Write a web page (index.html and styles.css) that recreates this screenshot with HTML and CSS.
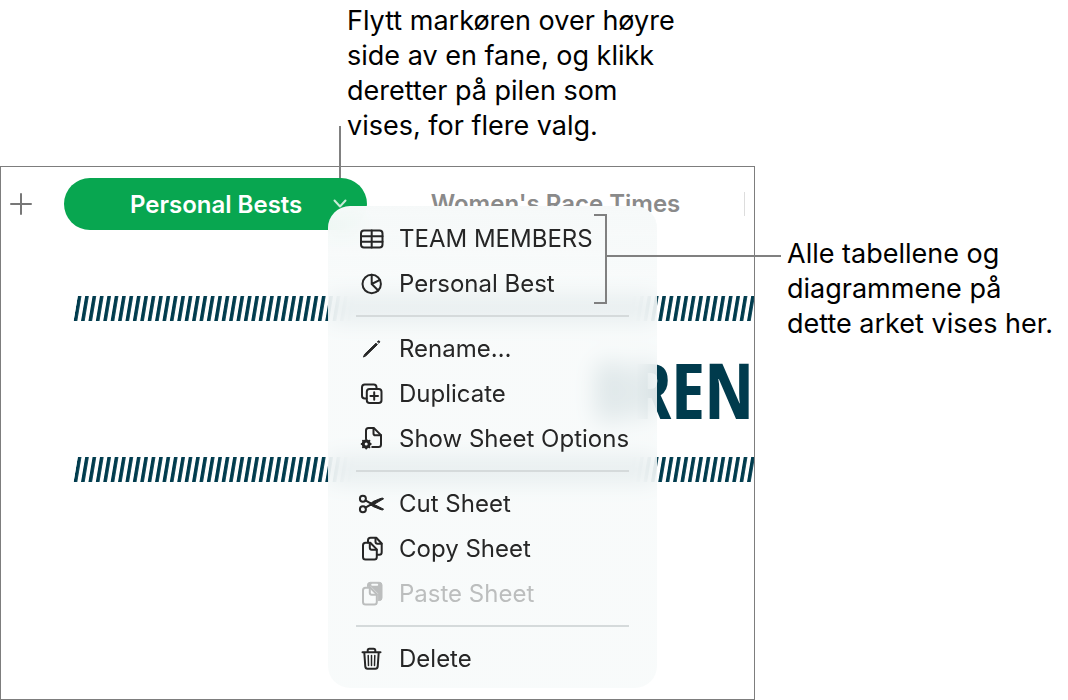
FILE: index.html
```html
<!DOCTYPE html>
<html lang="nb">
<head>
    <meta charset="UTF-8">
    <meta name="viewport" content="width=device-width, initial-scale=1.0">
    <title>Personal Bests</title>
    <link rel="stylesheet" href="styles.css">
</head>
<body>
    <main class="figure">
        <p class="callout callout-top">Flytt markøren over høyre<br>side av en fane, og klikk<br>deretter på pilen som<br>vises, for flere valg.</p>

        <section class="window">
            <nav class="tabs">
                <button class="add" aria-label="Add sheet">
                    <svg width="22" height="22" viewBox="0 0 22 22"><path d="M11 1v20M1 11h20"/></svg>
                </button>
                <button class="tab active">
                    <span>Personal Bests</span>
                    <svg class="chevron" width="14" height="10" viewBox="0 0 14 10"><path d="M1.5 1.5L7 7.5l5.500-6"/></svg>
                </button>
                <button class="tab">Women's Race Times</button>
            </nav>

            <div class="canvas">
                <svg class="stripes" width="100%" height="25">
                    <defs>
                        <pattern id="hatch" width="7.4" height="25" patternUnits="userSpaceOnUse">
                            <rect width="3.6" height="25"/>
                        </pattern>
                    </defs>
                    <g transform="translate(3.800 0) skewX(-9.500)"><rect width="110%" height="25" fill="url(#hatch)"/></g>
                </svg>
                <h1 class="title">BREN</h1>
                <svg class="stripes" width="100%" height="25">
                    <g transform="translate(3.800 0) skewX(-9.500)"><rect width="110%" height="25" fill="url(#hatch)"/></g>
                </svg>
            </div>

            <div class="menu">
                <button class="item">
                    <svg class="icon" viewBox="0 0 28 28"><rect x="3" y="5.500" width="21.500" height="17" rx="3"/><path d="M3 11.200h21.500M3 16.800h21.500M13.700 5.500v17"/></svg>
                    TEAM MEMBERS
                </button>
                <button class="item">
                    <svg class="icon" viewBox="0 0 28 28"><circle cx="13.700" cy="14" r="9.200"/><path d="M13.700 4.800V14l6.500 6.500M13.700 14l8.200-4.200"/></svg>
                    Personal Best
                </button>
                <hr>
                <button class="item">
                    <svg class="icon" viewBox="0 0 28 28"><path class="solid" d="M5.600 21.700l.9-2.300L18 8.200l1.400 1.400L8 20.700z"/><path class="solid" d="M19.600 6.600l.5-.5q.7-.5 1.300 0 .6.700.1 1.300l-.5.500z"/></svg>
                    Rename…
                </button>
                <button class="item">
                    <svg class="icon" viewBox="0 0 28 28"><path d="M8.500 18.500H6.800Q4 18.500 4 15.700V7.300Q4 4.500 6.800 4.500h8.900q2.800 0 2.800 2.800v1.400"/><rect x="8.800" y="9" width="14.700" height="14" rx="2.800"/><path d="M16.200 12.200v7.600M12.400 16h7.600"/></svg>
                    Duplicate
                </button>
                <button class="item">
                    <svg class="icon" viewBox="0 0 28 28"><path d="M8 13.500V5.500Q8 3 10.500 3h5.300l7.200 7.100v9.400q0 2.500-2.500 2.500h-6.300"/><path d="M15.500 3.200v5.200q0 1.800 1.800 1.800H23"/><circle class="gear" cx="8.200" cy="19" r="3"/><path d="M8.200 14.500v1M8.200 22.500v1M3.700 19h1M11.700 19h1M5 15.800l.8.800M10.600 21.400l.8.800M5 22.200l.8-.8M10.600 16.600l.8-.8"/></svg>
                    Show Sheet Options
                </button>
                <hr>
                <button class="item">
                    <svg class="icon" viewBox="0 0 28 28"><circle cx="4.900" cy="8.700" r="3"/><circle cx="4.900" cy="19.300" r="3"/><path d="M7.500 10.300l6 3.600M7.500 17.700l6-3.600"/><path class="solid" d="M11.500 15.200l3.300-3.600 8.200-3.300q2-.6 2.600.5L14.500 15.200zM12.500 12.600l13.100 6.600q-.7 1.200-2.600.5l-8.200-3.300z"/></svg>
                    Cut Sheet
                </button>
                <button class="item">
                    <svg class="icon" viewBox="0 0 28 28"><path d="M10 7.500V5.300Q10 2.800 12.500 2.800h5.800l5.400 5.700v8.700q0 2.500-2.500 2.500h-1.700"/><path d="M17.500 3v3.700q0 2 2 2h4"/><path d="M7.500 7.700h4.800l6.500 6.700v7.600q0 2.500-2.500 2.500H7.500Q5 24.500 5 22V10.200q0-2.500 2.500-2.500z"/><path d="M11.800 8v4.700q0 2 2 2h4.800"/></svg>
                    Copy Sheet
                </button>
                <button class="item" disabled>
                    <svg class="icon" viewBox="0 0 28 28"><path class="solid" d="M9.500 6.500V5q0-2.700 2.700-2.700h9.100Q24 2.300 24 5v12.900q0 2.700-2.700 2.700h-1.100v-7L13 6.500z"/><path class="slot" d="M14.200 4.700h5"/><path d="M7.500 7.700h4.800l6.500 6.700v7.600q0 2.500-2.500 2.500H7.500Q5 24.500 5 22V10.200q0-2.500 2.500-2.500z"/><path d="M11.800 8v4.700q0 2 2 2h4.800"/></svg>
                    Paste Sheet
                </button>
                <hr>
                <button class="item">
                    <svg class="icon" viewBox="0 0 28 28"><path d="M4.500 7.200h18M9.700 7V5.500q0-1.700 1.700-1.700h4.200q1.700 0 1.700 1.700V7M6.300 7.500l1 14.200q.2 2 2.200 2h8q2 0 2.200-2l1-14.200"/><path class="thin" d="M10.200 10.500l.3 10M13.500 10.500v10M16.800 10.500l-.3 10"/></svg>
                    Delete
                </button>
            </div>

            <span class="leader-tab"></span>
            <span class="bracket"></span>
            <span class="leader-menu"></span>
        </section>

        <p class="callout callout-side">Alle tabellene og<br>diagrammene på<br>dette arket vises her.</p>
    </main>
</body>
</html>
```
FILE: styles.css
```css
* {
    box-sizing: border-box;
}
body {
    margin: 0;
    background-color: #fff;
    font-family: Inter, "Liberation Sans", sans-serif;
}
button {
    padding: 0;
    border: none;
    background: none;
    font: inherit;
    text-align: left;
    cursor: pointer;
}
svg {
    fill: none;
    stroke: currentColor;
    stroke-linecap: round;
    stroke-linejoin: round;
}
.figure {
    display: grid;
    grid-template-columns: minmax(0, 1fr) 313px;
    grid-template-rows: auto 1fr;
    min-height: 100vh;
}
.callout {
    margin: 0;
    color: #000;
    font-size: 27px;
    line-height: 35px;
    white-space: nowrap;
}
.callout-top {
    grid-column: 1 / 3;
    padding: 3px 0 23px 347px;
}
.callout-side {
    padding: 70px 0 0 32px;
}

/* window */
.window {
    position: relative;
    border: 1px solid #7d7d7d;
}
.tabs {
    display: flex;
    align-items: center;
    padding: 11px 9px 0 9px;
    font-size: 24px;
    font-weight: 600;
}
.add {
    width: 22px;
    height: 22px;
    margin-right: 32px;
    color: #777;
}
.add svg {
    display: block;
    stroke-width: 2;
}
.tab {
    flex: 1;
    height: 52px;
    color: #8a8a8a;
    text-align: center;
    white-space: nowrap;
}
.tab:last-child {
    height: 24px;
    line-height: 24px;
    border-right: 1px solid #ddd;
}
.tab.active {
    display: flex;
    flex: 0 0 303px;
    align-items: center;
    justify-content: space-between;
    padding: 0 20px 0 66px;
    border-radius: 26px;
    background-color: #08a650;
    color: #fff;
}
.chevron {
    color: #c9ecd8;
    stroke-width: 2;
}
.canvas {
    padding: 66px 0 0 73px;
    overflow: hidden;
    color: #003b4d;
}
.stripes {
    display: block;
    overflow: visible;
}
.stripes rect {
    stroke: none;
}
.stripes pattern rect {
    fill: #003b4d;
}
.title {
    height: 136px;
    margin: 0;
    padding-left: 519px;
    font-family: "Noto Sans ExtraCondensed", "Open Sans Condensed", "Roboto Condensed", "Liberation Sans Narrow", sans-serif;
    font-size: 78px;
    font-weight: 700;
    line-height: 136px;
    white-space: nowrap;
}

/* menu */
.menu {
    position: absolute;
    top: 39px;
    left: 327px;
    width: 329px;
    padding: 10px 28px 7px;
    border-radius: 22px;
    background-image: linear-gradient(#f6f9f9, rgba(247, 250, 250, 0.85) 80px);
    backdrop-filter: blur(12px);
    color: #262626;
    font-size: 24px;
}
.menu hr {
    height: 2px;
    margin: 9px 0;
    border: none;
    background-color: #d5dadb;
}
.item {
    display: flex;
    align-items: center;
    gap: 13px;
    width: 100%;
    height: 45px;
    padding-left: 2px;
    color: inherit;
    white-space: nowrap;
}
.item:disabled {
    color: #bcbebe;
}
.icon {
    flex: none;
    width: 28px;
    height: 28px;
    stroke-width: 2;
}
.icon .solid {
    fill: currentColor;
    stroke-width: 1;
}
.icon .slot {
    stroke: #f7fafa;
}
.icon .gear {
    stroke-width: 3;
}
.icon .thin {
    stroke-width: 1.5;
}

/* leader lines */
.leader-tab,
.leader-menu,
.bracket {
    position: absolute;
    pointer-events: none;
}
.leader-tab {
    top: -41px;
    left: 338px;
    width: 2px;
    height: 52px;
    background-color: #808080;
}
.bracket {
    top: 47px;
    left: 593px;
    width: 13px;
    height: 90px;
    border: 2px solid #808080;
    border-left: none;
}
.leader-menu {
    top: 88px;
    left: 606px;
    right: -27px;
    height: 2px;
    background-color: #808080;
}
```
